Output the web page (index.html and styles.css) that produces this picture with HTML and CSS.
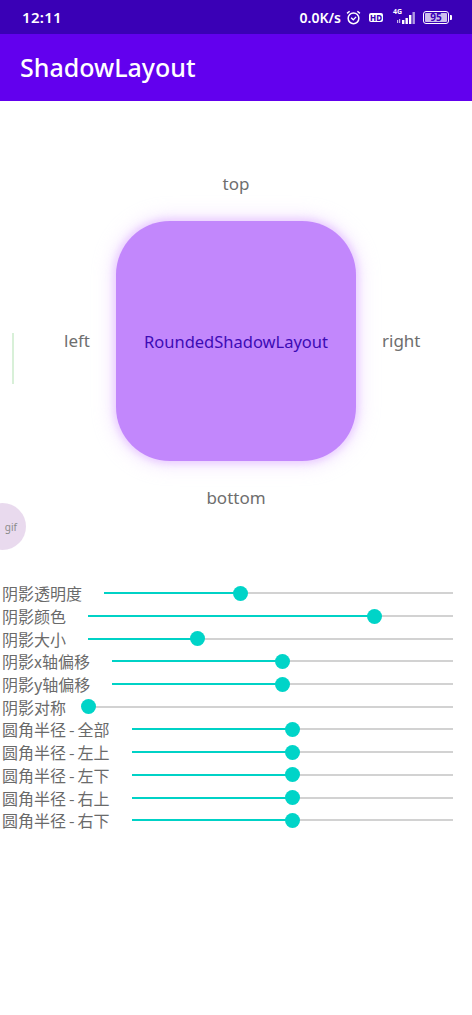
FILE: index.html
```html
<!DOCTYPE html>
<html lang="zh">
<head>
<meta charset="utf-8">
<title>ShadowLayout</title>
<link rel="stylesheet" href="styles.css">
</head>
<body>
<div class="phone">
  <div class="statusbar">
    <span class="time">12:11</span>
    <div class="status-right">
      <span class="speed">0.0K/s</span>
      <svg class="ic-alarm" width="15" height="15" viewBox="0 0 14 14">
        <circle cx="7" cy="7.8" r="5" fill="none" stroke="#fff" stroke-width="1.4"/>
        <path d="M4.8 7.2 L6.8 9.2 L9.4 6.4" fill="none" stroke="#fff" stroke-width="1.3"/>
        <path d="M1 3.2 L3.4 1.2 M13 3.2 L10.6 1.2" stroke="#fff" stroke-width="1.4"/>
      </svg>
      <span class="hd">HD</span>
      <div class="signal">
        <span class="lte">4G</span>
        <svg width="20" height="14" viewBox="0 0 20 14">
          <rect x="1" y="9" width="1.2" height="3" fill="#fff" opacity="0.7"/>
          <rect x="3" y="8" width="1.2" height="4" fill="#fff" opacity="0.7"/>
          <rect x="6" y="9" width="2.4" height="4" fill="#fff"/>
          <rect x="9.5" y="7" width="2.4" height="6" fill="#fff"/>
          <rect x="13" y="4" width="2.4" height="9" fill="#fff"/>
          <rect x="16.5" y="1" width="2.4" height="12" fill="#fff" opacity="0.6"/>
        </svg>
      </div>
      <div class="battery"><span class="batt-body">95</span><span class="batt-nub"></span></div>
    </div>
  </div>
  <div class="appbar">ShadowLayout</div>

  <div class="stage">
    <div class="side-label">top</div>
    <div class="middle">
      <div class="side-label side-left">left</div>
      <div class="rounded-box">RoundedShadowLayout</div>
      <div class="side-label side-right">right</div>
    </div>
    <div class="side-label">bottom</div>
  </div>

  <div class="sliders">
    <div class="row"><span class="label">阴影透明度</span><div class="seek" style="--p:39%"><div class="fill"></div><div class="thumb"></div></div></div>
    <div class="row"><span class="label">阴影颜色</span><div class="seek" style="--p:78.5%"><div class="fill"></div><div class="thumb"></div></div></div>
    <div class="row"><span class="label">阴影大小</span><div class="seek" style="--p:30%"><div class="fill"></div><div class="thumb"></div></div></div>
    <div class="row"><span class="label">阴影x轴偏移</span><div class="seek" style="--p:50%"><div class="fill"></div><div class="thumb"></div></div></div>
    <div class="row"><span class="label">阴影y轴偏移</span><div class="seek" style="--p:50%"><div class="fill"></div><div class="thumb"></div></div></div>
    <div class="row"><span class="label">阴影对称</span><div class="seek" style="--p:0%"><div class="fill"></div><div class="thumb"></div></div></div>
    <div class="row"><span class="label">圆角半径<span class="dash">-</span>全部</span><div class="seek" style="--p:50%"><div class="fill"></div><div class="thumb"></div></div></div>
    <div class="row"><span class="label">圆角半径<span class="dash">-</span>左上</span><div class="seek" style="--p:50%"><div class="fill"></div><div class="thumb"></div></div></div>
    <div class="row"><span class="label">圆角半径<span class="dash">-</span>左下</span><div class="seek" style="--p:50%"><div class="fill"></div><div class="thumb"></div></div></div>
    <div class="row"><span class="label">圆角半径<span class="dash">-</span>右上</span><div class="seek" style="--p:50%"><div class="fill"></div><div class="thumb"></div></div></div>
    <div class="row"><span class="label">圆角半径<span class="dash">-</span>右下</span><div class="seek" style="--p:50%"><div class="fill"></div><div class="thumb"></div></div></div>
  </div>

  <div class="green-line"></div>
  <div class="gif-bubble"><span>gif</span></div>
</div>
</body>
</html>
```

FILE: styles.css
```css
* { box-sizing: border-box; }
html, body { margin: 0; padding: 0; background: #fff; }
body { font-family: "Noto Sans", "Noto Sans CJK SC", sans-serif; }

.phone {
  position: relative;
  width: 472px;
  height: 1015px;
  overflow: hidden;
  background: #fff;
}

.statusbar {
  height: 34px;
  background: #3a00b6;
  color: #fff;
  display: flex;
  align-items: center;
  justify-content: space-between;
  padding: 0 20px 0 22px;
}
.time { font-size: 15px; font-weight: 600; letter-spacing: 0.3px; }
.status-right { display: flex; align-items: center; gap: 0; }
.speed { font-size: 14px; font-weight: 600; margin-right: 5px; }
.ic-alarm { margin-right: 8px; }
.hd {
  font-size: 8px;
  font-weight: 800;
  color: #3a00b6;
  background: #fff;
  border-radius: 2px;
  padding: 0 1px;
  line-height: 9px;
  height: 9px;
  margin-right: 7px;
}
.signal { position: relative; width: 26px; height: 16px; margin-right: 7px; }
.signal svg { position: absolute; right: 0; bottom: 0; }
.lte { position: absolute; left: 3px; top: -2px; font-size: 7px; font-weight: 700; }
.battery { display: flex; align-items: center; }
.batt-body {
  width: 26px;
  height: 13px;
  border: 1.5px solid #fff;
  border-radius: 3px;
  background: rgba(255,255,255,0.75);
  background-clip: content-box;
  padding: 1px;
  color: #3a00b6;
  font-size: 10px;
  font-weight: 700;
  line-height: 9px;
  text-align: center;
}
.batt-nub { width: 2px; height: 5px; background: #fff; border-radius: 0 1px 1px 0; margin-left: 1px; }

.appbar {
  height: 67px;
  background: #6200ee;
  color: #fff;
  font-size: 25px;
  font-weight: 500;
  padding-left: 20px;
  display: flex;
  align-items: center;
  padding-bottom: 2px;
}

.stage {
  display: flex;
  flex-direction: column;
  align-items: center;
  padding-top: 71px;
  gap: 25px;
}
.side-label {
  font-size: 17px;
  line-height: 24px;
  height: 24px;
  color: #6e6e6e;
}
.middle {
  width: 100%;
  display: grid;
  grid-template-columns: 1fr 240px 1fr;
  align-items: center;
}
.side-left { justify-self: end; margin-right: 26px; }
.side-right { justify-self: start; margin-left: 26px; }
.rounded-box {
  width: 240px;
  height: 240px;
  border-radius: 54px;
  background: #c287fc;
  display: flex;
  align-items: center;
  justify-content: center;
  color: #3d0bb5;
  font-size: 16.5px;
  box-shadow: 0 0 6px 3px rgba(222, 175, 255, 0.5), 0 0 16px 8px rgba(235, 205, 255, 0.35);
}

.sliders {
  margin-top: 72px;
  display: flex;
  flex-direction: column;
}
.row {
  height: 22.7px;
  display: flex;
  align-items: center;
  padding-left: 2px;
  padding-right: 19px;
}
.label {
  font-family: "Noto Sans CJK SC", sans-serif;
  font-size: 16px;
  color: #6a6a6a;
  white-space: nowrap;
  line-height: 22px;
}
.dash { padding: 0 3px; }
.seek {
  position: relative;
  flex: 1;
  height: 2px;
  margin-left: 22px;
  background: #d2d2d2;
}
.fill {
  width: var(--p);
  height: 100%;
  background: #00d2c6;
}
.thumb {
  position: absolute;
  left: var(--p);
  top: 50%;
  width: 15px;
  height: 15px;
  margin: -7.5px 0 0 -7.5px;
  border-radius: 50%;
  background: #00d4c8;
}

.green-line {
  position: absolute;
  left: 12px;
  top: 333px;
  width: 2px;
  height: 51px;
  background: #d8f0d8;
}
.gif-bubble {
  position: absolute;
  left: -21px;
  top: 503px;
  width: 47px;
  height: 47px;
  border-radius: 50%;
  background: rgba(225, 205, 232, 0.75);
  display: flex;
  align-items: center;
  justify-content: flex-end;
  padding-right: 9px;
}
.gif-bubble span {
  font-size: 10px;
  color: #8a8a8a;
}
```
